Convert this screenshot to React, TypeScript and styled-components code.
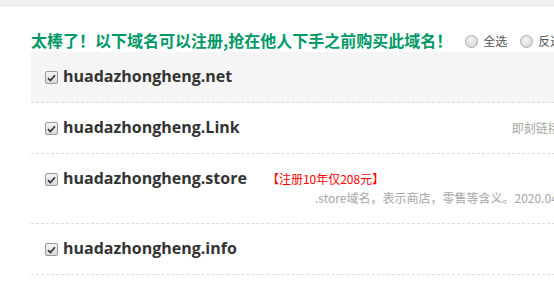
import React from "react";
import styled, { createGlobalStyle } from "styled-components";

const Global = createGlobalStyle`
  html, body { margin: 0; padding: 0; background: #fff; overflow: hidden; }
  body { font-family: "Noto Sans CJK SC", "Noto Sans", sans-serif; }
`;

const TopBand = styled.div`
  height: 5px;
  background: #eff1f3;
  border-bottom: 1px solid #e2e4e7;
`;

const Wrap = styled.div`
  margin-left: 31px;
  width: 900px;
`;

const Header = styled.div`
  display: flex;
  align-items: center;
  padding-top: 23px;
  padding-bottom: 1px;
  height: 22px;
`;

const Title = styled.h2`
  margin: 0;
  font-size: 16px;
  line-height: 22px;
  font-weight: bold;
  color: #009966;
  font-family: "Noto Sans CJK SC", sans-serif;
  white-space: nowrap;
`;

const RadioGroup = styled.div`
  display: flex;
  align-items: center;
  gap: 13px;
  margin-left: 13px;
  margin-top: 2px;
`;

const RadioItem = styled.label`
  display: flex;
  align-items: center;
  gap: 5px;
  font-size: 12px;
  line-height: 16px;
  color: #555;
  white-space: nowrap;
`;

const RadioDot = styled.span`
  width: 11px;
  height: 11px;
  border-radius: 50%;
  border: 1px solid #a9a9a9;
  background: radial-gradient(circle at 40% 35%, #f4f4f4 0%, #dcdcdc 70%, #cfcfcf 100%);
`;

const List = styled.div`
  display: flex;
  flex-direction: column;
`;

const Row = styled.div<{ $shaded?: boolean }>`
  display: flex;
  flex-direction: column;
  padding: 14px 14px 16px 14px;
  background: ${(p) => (p.$shaded ? "#f5f5f5" : "#fff")};
  border-bottom: 1px dashed #dcdcdc;
`;

const MainLine = styled.div`
  display: flex;
  align-items: center;
  height: 20px;
`;

const Check = styled.span`
  flex: none;
  width: 11px;
  height: 11px;
  border: 1px solid #9a9a9a;
  border-radius: 2px;
  background: linear-gradient(#f4f4f4, #dadada);
  display: flex;
  align-items: center;
  justify-content: center;
  margin-right: 5px;
  margin-top: 3px;
`;

const Domain = styled.span`
  font-family: "Open Sans", "Noto Sans", sans-serif;
  font-weight: bold;
  font-size: 16px;
  color: #333;
  white-space: nowrap;
`;

const Tag = styled.span`
  margin-left: 20px;
  font-size: 12px;
  color: #f00;
  white-space: nowrap;
`;

const Note = styled.span<{ $left: number }>`
  font-size: 12px;
  color: #a6a6a6;
  white-space: nowrap;
  margin-left: ${(p) => p.$left}px;
`;

const SubLine = styled.div`
  display: flex;
  height: 18px;
  line-height: 18px;
  margin-top: 1px;
`;

function CheckBox() {
  return (
    <Check>
      <svg width="9" height="8" viewBox="0 0 9 8">
        <path d="M1 4.2 L3.4 6.6 L8 1.2" fill="none" stroke="#333" strokeWidth="1.7" />
      </svg>
    </Check>
  );
}

export default function App() {
  return (
    <>
      <Global />
      <TopBand />
      <Wrap>
        <Header>
          <Title>太棒了！以下域名可以注册,抢在他人下手之前购买此域名！</Title>
          <RadioGroup>
            <RadioItem>
              <RadioDot />
              全选
            </RadioItem>
            <RadioItem>
              <RadioDot />
              反选
            </RadioItem>
          </RadioGroup>
        </Header>
        <List>
          <Row $shaded>
            <MainLine>
              <CheckBox />
              <Domain>huadazhongheng.net</Domain>
            </MainLine>
          </Row>
          <Row>
            <MainLine>
              <CheckBox />
              <Domain>huadazhongheng.Link</Domain>
              <Note $left={272}>即刻链接，畅享网络</Note>
            </MainLine>
          </Row>
          <Row>
            <MainLine>
              <CheckBox />
              <Domain>huadazhongheng.store</Domain>
              <Tag>【注册10年仅208元】</Tag>
            </MainLine>
            <SubLine>
              <Note $left={270}>.store域名，表示商店，零售等含义。2020.04上线</Note>
            </SubLine>
          </Row>
          <Row>
            <MainLine>
              <CheckBox />
              <Domain>huadazhongheng.info</Domain>
            </MainLine>
          </Row>
        </List>
      </Wrap>
    </>
  );
}
